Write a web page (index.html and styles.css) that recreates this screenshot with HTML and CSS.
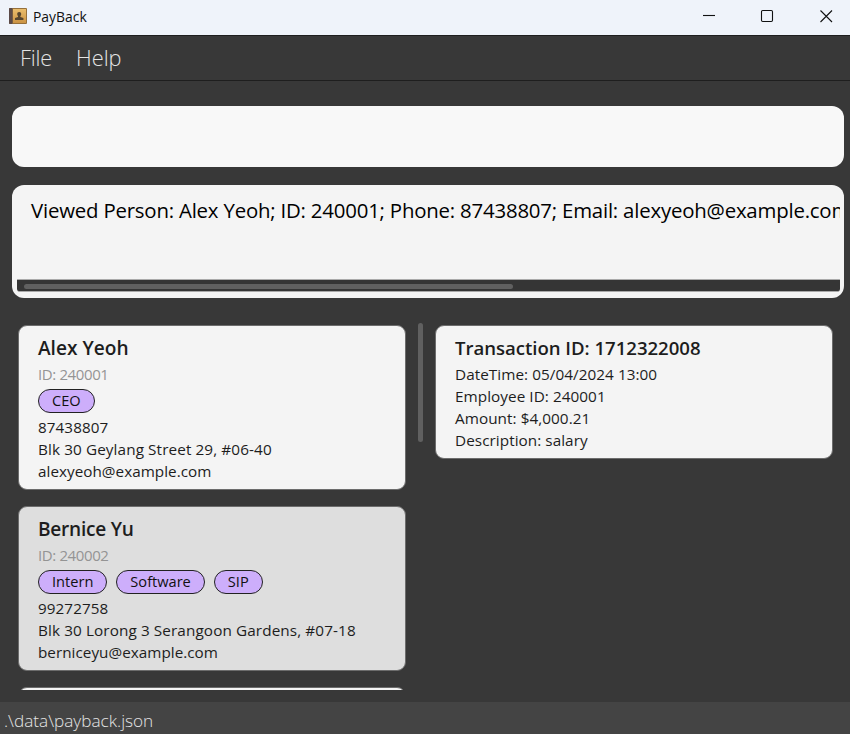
FILE: index.html
```html
<!DOCTYPE html>
<html lang="en">
<head>
<meta charset="utf-8">
<title>PayBack</title>
<link rel="stylesheet" href="styles.css">
</head>
<body>
<div class="window">
  <header class="titlebar">
    <svg class="app-icon" width="18" height="17" viewBox="0 0 18 17">
      <defs><linearGradient id="cover" x1="0" y1="0" x2="0" y2="1"><stop offset="0" stop-color="#eabd6c"/><stop offset="1" stop-color="#cb9344"/></linearGradient></defs>
      <rect x="0" y="0" width="18" height="16" rx="1" fill="#96703b"/>
      <rect x="4" y="1" width="13" height="14" fill="url(#cover)"/>
      <rect x="0" y="0" width="3.5" height="16" rx="1" fill="#5b4a48"/>
      <path d="M10.2 4c1.3 0 2 .9 2 2 0 1-.4 1.600-.8 2v1l3 1v2H6v-2l3-1V8c-.5-.4-.8-1-.8-2 0-1.100.7-2 2-2z" fill="#56452f"/>
    </svg>
    <span class="title">PayBack</span>
    <svg class="controls" width="132" height="14" viewBox="0 0 132 14" fill="none" stroke="#111" stroke-width="1.100">
      <path d="M0 6.500h12"/>
      <rect x="58.500" y="1.500" width="11" height="11" rx="1.200"/>
      <path d="M117.500 1.500l11.500 11.500M129 1.500L117.500 13"/>
    </svg>
  </header>
  <nav class="menubar"><span class="file">File</span><span class="help">Help</span></nav>
  <main class="content">
    <div class="command"></div>
    <div class="result">
      <div class="message">Viewed Person: Alex Yeoh; ID: 240001; Phone: 87438807; Email: alexyeoh@example.com</div>
      <div class="track"><div class="thumb"></div></div>
    </div>
    <div class="panes">
      <section class="people">
        <article class="card person">
          <h2>Alex Yeoh</h2>
          <p class="muted">ID: 240001</p>
          <div class="tags"><span>CEO</span></div>
          <p class="num">87438807</p>
          <p>Blk 30 Geylang Street 29, #06-40</p>
          <p class="mail">alexyeoh@example.com</p>
        </article>
        <article class="card person alt">
          <h2>Bernice Yu</h2>
          <p class="muted">ID: 240002</p>
          <div class="tags"><span>Intern</span><span>Software</span><span>SIP</span></div>
          <p class="num">99272758</p>
          <p>Blk 30 Lorong 3 Serangoon Gardens, #07-18</p>
          <p class="mail">berniceyu@example.com</p>
        </article>
        <article class="card person"></article>
      </section>
      <div class="vthumb"></div>
      <section class="transactions">
        <article class="card transaction">
          <h2>Transaction ID: 1712322008</h2>
          <p>DateTime: 05/04/2024 13:00</p>
          <p>Employee ID: 240001</p>
          <p>Amount: $4,000.21</p>
          <p>Description: salary</p>
        </article>
      </section>
    </div>
  </main>
  <footer class="status">.\data\payback.json</footer>
</div>
</body>
</html>
```
FILE: styles.css
```css
* { box-sizing: border-box; }
body { margin: 0; background: #383838; font-family: "Open Sans", sans-serif; }
h2, p { margin: 0; }
.window { width: 850px; height: 734px; display: flex; flex-direction: column; overflow: hidden; background: #383838; }

.titlebar { height: 35px; flex: none; display: flex; align-items: flex-start; background: #eff3fa; color: #111; }
.app-icon { margin: 8px 0 0 9px; }
.title { margin: 6px 0 0 6px; font-size: 13.9px; line-height: 22px; }
.controls { margin: 9px 15px 0 auto; }

.menubar { height: 46px; flex: none; display: flex; border-top: 1px solid #1e1e1e; border-bottom: 1px solid #1e1e1e; background: #383838; color: #e4e4e4; font-size: 21.8px; font-weight: 300; line-height: 43px; }
.file { margin-left: 20px; width: 56px; letter-spacing: -0.2px; }

.content { flex: none; height: 621px; padding: 25px 6px 0 12px; display: flex; flex-direction: column; }
.command { height: 61px; flex: none; border-radius: 12px; background: #f8f8f8; }
.result { height: 113px; flex: none; margin-top: 18px; padding: 12px 4px 0 5px; border-radius: 12px; background: #f4f4f4; }
.message { height: 82px; padding-left: 14px; overflow: hidden; white-space: nowrap; font-size: 20.4px; letter-spacing: -0.2px; line-height: 27px; color: #000; }
.track { height: 13px; padding: 4px 0 0 7px; border: solid #aaa; border-width: 1px 0; border-radius: 1px 1px 3px 3px; background: #353535; }
.thumb { width: 489px; height: 5px; border-radius: 3px; background: #606060; }

.panes { display: flex; margin-top: 25px; height: 367px; overflow: hidden; }
.people { width: 388px; margin-left: 6px; padding-top: 2px; }
.vthumb { width: 5.5px; height: 119px; margin: 0 0 0 11.5px; border-radius: 3px; background: #606060; }
.transactions { width: 398px; margin-left: 12px; padding-top: 2px; }
.card { border: 1px solid #6c6c6c; border-radius: 9px; background: #f4f4f4; color: #1d1d1d; padding: 9px 0 0 19px; font-size: 15.3px; letter-spacing: 0.1px; line-height: 22px; white-space: nowrap; }
.person { height: 165px; margin-bottom: 16px; }
.transaction { height: 134px; }
.alt { background: #dedede; }
.card h2 { font-size: 19.1px; font-weight: 600; letter-spacing: 0; line-height: 26px; margin-bottom: 2px; }
.alt h2 { letter-spacing: -0.25px; }
.transaction h2 { font-size: 18.6px; letter-spacing: -0.03px; }
.card.transaction { letter-spacing: 0.05px; }
.card .muted { font-size: 15px; letter-spacing: -0.38px; color: #949494; }
.card .num { font-size: 15.2px; }
.card .mail { font-size: 15.25px; letter-spacing: 0.03px; }
.tags { display: flex; gap: 9px; margin: 4px 0 3px; letter-spacing: 0; }
.tags span { height: 24px; padding: 0 13px; border: 1px solid #222; border-radius: 12px; background: #cdaefb; font-size: 14.6px; line-height: 21px; color: #111; }

.status { height: 32px; flex: none; padding-left: 4px; background: #444; color: #e4e4e4; font-size: 17.2px; font-weight: 300; line-height: 38px; }
```
